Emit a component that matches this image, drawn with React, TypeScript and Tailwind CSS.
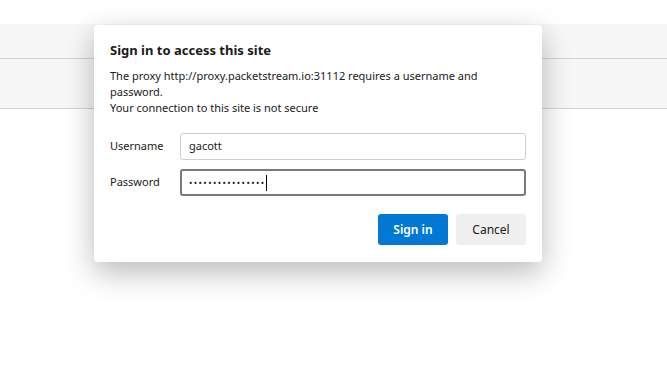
export default function App() {
  return (
    <div className="relative h-[366px] w-[667px] overflow-hidden bg-white font-['Noto_Sans',sans-serif]">
      <div className="mt-[24px] h-[35px] border-b border-[#d4d4d4] bg-[#f7f7f7]" />
      <div className="h-[50px] border-b border-[#d4d4d4] bg-[#f7f7f7]" />

      <div className="absolute left-[94px] top-[25px] w-[448px] rounded-[4px] bg-white px-[16px] pb-[17px] pt-[16px] text-[#1a1a1a] shadow-[0_10px_30px_rgba(0,0,0,0.28)]">
        <h1 className="text-[13px] font-bold leading-[18px]">Sign in to access this site</h1>
        <p className="mt-[9px] text-[11px] leading-[16px] text-[#202020]">
          The proxy http://proxy.packetstream.io:31112 requires a username and password.
          <br />
          Your connection to this site is not secure
        </p>

        <div className="mt-[17px] flex flex-col gap-[9px]">
          <div className="flex items-center">
            <label className="w-[70px] text-[11px] text-[#202020]">Username</label>
            <div className="flex h-[27px] flex-1 items-center rounded-[3px] border border-[#d0d0d0] px-[8px] text-[11px]">
              gacott
            </div>
          </div>
          <div className="flex items-center">
            <label className="w-[70px] text-[11px] text-[#202020]">Password</label>
            <div className="flex h-[27px] flex-1 items-center rounded-[3px] border-2 border-[#7a7a7a] px-[7px] text-[9px] tracking-[1.4px]">
              <span>••••••••••••••••</span>
              <span className="h-[16px] w-px bg-black" />
            </div>
          </div>
        </div>

        <div className="mt-[18px] flex justify-end gap-[8px]">
          <button className="h-[31px] w-[70px] rounded-[3px] bg-[#0078d4] text-[12px] font-semibold text-white">Sign in</button>
          <button className="h-[31px] w-[70px] rounded-[3px] bg-[#efefef] text-[12px] text-[#1a1a1a]">Cancel</button>
        </div>
      </div>
    </div>
  )
}
